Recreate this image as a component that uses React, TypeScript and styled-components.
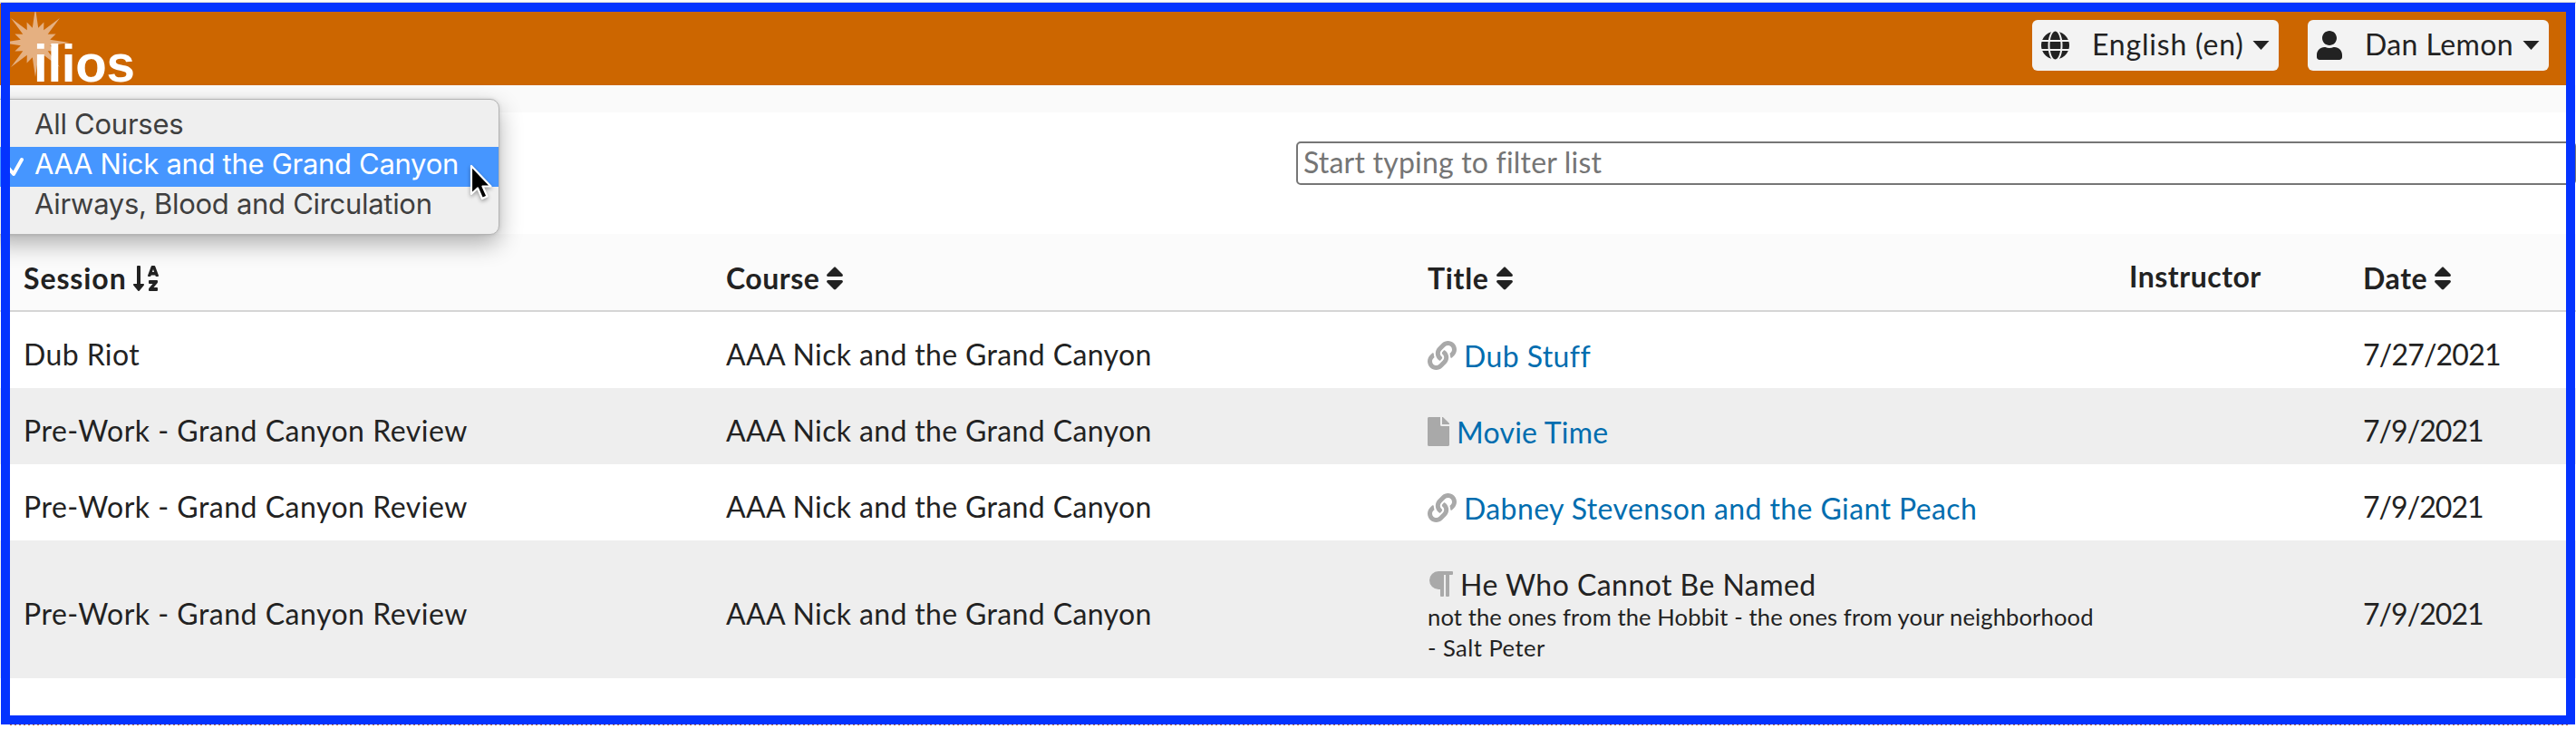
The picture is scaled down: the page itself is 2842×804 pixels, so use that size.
import React from "react";
import styled, { createGlobalStyle } from "styled-components";
import {
  FaFile,
  FaGlobe,
  FaLink,
  FaParagraph,
  FaSort,
  FaSortAlphaDown,
  FaUser,
} from "react-icons/fa";

const Global = createGlobalStyle`
  *, *::before, *::after { box-sizing: border-box; }
  body { margin: 0; background: #fff; }
`;

const Page = styled.div`
  position: relative;
  width: 2842px;
  height: 804px;
  overflow: hidden;
  background: #fff;
  color: #222;
  font-family: Lato, "Open Sans", sans-serif;
  font-size: 32px;
  line-height: 38px;
  white-space: nowrap;
`;

const Frame = styled.div`
  position: absolute;
  inset: 3px 1px 5px 1px;
  border: 10px solid #0433ff;
  pointer-events: none;
`;

const TopEdge = styled.div`
  height: 4px;
  border-top: 2px solid #fafafa;
  background: #d8d8d8;
`;

const BottomEdge = styled.div`
  position: absolute;
  left: 11px;
  right: 9px;
  top: 799px;
  height: 1px;
  background: repeating-linear-gradient(90deg, #b9673f 0 2px, #fff 2px 5px);
`;

const Text = styled.span<{ $spacing?: number }>`
  letter-spacing: ${(p) => p.$spacing ?? 0}px;
`;

const Header = styled.header`
  display: flex;
  justify-content: space-between;
  height: 90px;
  margin-right: 1px;
  padding: 0 29px 0 5px;
  background: #cc6600;
`;

const Logo = styled.div`
  position: relative;
  width: 160px;
  height: 90px;
`;

const Burst = styled.svg`
  display: block;
  width: 76px;
  height: 90px;
`;

const LogoName = styled.span`
  position: absolute;
  left: 32px;
  top: 34px;
  color: #fff;
  font: bold 56.5px/65px "Liberation Sans", Arial, sans-serif;
  letter-spacing: -0.3px;
`;

const HeaderMenus = styled.div`
  display: flex;
  gap: 32px;
  padding-top: 18px;
`;

const MenuButton = styled.button<{ $width: number }>`
  display: flex;
  align-items: center;
  width: ${(p) => p.$width}px;
  height: 56px;
  padding: 0 10px;
  border: 0;
  border-radius: 6px;
  background: #f3f3f3;
  color: #222;
  font: inherit;
  svg { flex: none; }
`;

const ButtonLabel = styled(Text)`
  flex: 1;
  padding: 0 0 3px 25px;
  text-align: left;
`;

const Caret = styled.svg`
  width: 19px;
  height: 10px;
`;

const SubBar = styled.div`
  height: 30px;
  background: #fafafa;
`;

const FilterBar = styled.div`
  display: flex;
  justify-content: flex-end;
  align-items: flex-start;
  height: 134px;
  padding-top: 32px;
`;

const FilterInput = styled.input`
  width: 1412px;
  height: 48px;
  padding: 0 4px 3px 6px;
  border: 2px solid #767676;
  border-radius: 5px;
  background: #fff;
  color: #222;
  font: inherit;
  letter-spacing: 0.2px;
  &::placeholder { color: #757575; opacity: 1; }
`;

const columns = "775px 774px 774px 258px 1fr";

const HeadRow = styled.div`
  display: grid;
  grid-template-columns: ${columns};
  align-items: center;
  height: 86px;
  padding: 13px 0 0 26px;
  border-bottom: 2px solid #d5d5d5;
  background: #fbfbfb;
  font-weight: 700;
`;

const HeadCell = styled.div<{ $plain?: boolean }>`
  display: flex;
  align-items: center;
  gap: 7px;
  padding-bottom: ${(p) => (p.$plain ? 3 : 0)}px;
`;

const Row = styled.div<{ $tall?: boolean; $shaded?: boolean }>`
  display: grid;
  grid-template-columns: ${columns};
  align-items: center;
  height: ${(p) => (p.$tall ? 152 : 84)}px;
  padding-left: 26px;
  background: ${(p) => (p.$shaded ? "#eeeeee" : "#fff")};
`;

const Cell = styled.div`
  padding-top: 9px;
`;

const TitleCell = styled.div`
  align-self: start;
  padding-top: 32px;
`;

const TitleLine = styled.div<{ $link?: boolean }>`
  display: flex;
  align-items: center;
  gap: 8px;
  height: 32px;
  color: ${(p) => (p.$link ? "#006daf" : "#222")};
  svg { color: #a9a9a9; }
`;

const TitleText = styled(Text)`
  padding-top: 2px;
`;

const Description = styled.div`
  margin-top: 4px;
  font-size: 25.6px;
  line-height: 33.5px;
`;

const Dropdown = styled.div`
  position: absolute;
  left: -12px;
  top: 109px;
  width: 563px;
  height: 150px;
  padding-top: 8px;
  border: 1px solid #b4b4b4;
  border-radius: 10px;
  background: #efefef;
  box-shadow: 0 10px 26px rgba(0, 0, 0, 0.3), 0 0 4px rgba(0, 0, 0, 0.12);
  font-family: Inter, Roboto, sans-serif;
  font-size: 31px;
`;

const Option = styled.div<{ $selected?: boolean; $spacing: number }>`
  display: flex;
  align-items: center;
  height: 44px;
  padding: 0 0 6px 16px;
  background: ${(p) => (p.$selected ? "#4696ff" : "transparent")};
  color: ${(p) => (p.$selected ? "#fff" : "#3f3f3f")};
  letter-spacing: ${(p) => p.$spacing}px;
`;

const CheckSlot = styled.span`
  display: flex;
  flex: none;
  width: 33px;
  padding-top: 5px;
`;

const Pointer = styled.svg`
  position: absolute;
  left: 516px;
  top: 179px;
  width: 29px;
  height: 44px;
  filter: drop-shadow(0 2px 2px rgba(0, 0, 0, 0.35));
`;

const rays = Array.from({ length: 16 }, (_, i) => {
  const angle = (i * Math.PI) / 8;
  const tip = i % 2 ? 24.5 : 38;
  const point = (r: number, a: number) =>
    `${(34 + r * Math.sin(a)).toFixed(1)},${(43 - r * Math.cos(a)).toFixed(1)}`;
  return `${point(tip, angle)} ${point(16.5, angle + Math.PI / 16)}`;
}).join(" ");

const CaretDown = () => (
  <Caret viewBox="0 0 19 10">
    <path d="M0.5 0H18.5L9.5 10Z" fill="currentColor" />
  </Caret>
);

const kinds = {
  link: { Icon: FaLink, width: 32 },
  file: { Icon: FaFile, width: 24 },
  text: { Icon: FaParagraph, width: 28 },
};

interface Item {
  session: [string, number];
  kind: keyof typeof kinds;
  title: [string, number];
  date: [string, number];
  notes?: [string, number][];
}

const review: [string, number] = ["Pre-Work - Grand Canyon Review", 0.5];
const shortDate: [string, number] = ["7/9/2021", -0.95];

const items: Item[] = [
  { session: ["Dub Riot", 0.4], kind: "link", title: ["Dub Stuff", 0.4], date: ["7/27/2021", -0.8] },
  { session: review, kind: "file", title: ["Movie Time", 0.25], date: shortDate },
  { session: review, kind: "link", title: ["Dabney Stevenson and the Giant Peach", 0.39], date: shortDate },
  {
    session: review,
    kind: "text",
    title: ["He Who Cannot Be Named", 0.45],
    date: shortDate,
    notes: [
      ["not the ones from the Hobbit - the ones from your neighborhood", 0.1],
      ["- Salt Peter", 0.45],
    ],
  },
];

const IconBox = styled.span<{ $width: number }>`
  display: flex;
  flex: none;
  width: ${(p) => p.$width}px;
  svg { flex: none; width: ${(p) => p.$width}px; height: 32px; }
`;

const Sort = () => (
  <IconBox $width={20}>
    <FaSort />
  </IconBox>
);

const TitleContent = ({ item }: { item: Item }) => {
  const { Icon, width } = kinds[item.kind];
  return (
    <TitleLine $link={item.kind !== "text"}>
      <IconBox $width={width}>
        <Icon />
      </IconBox>
      <TitleText $spacing={item.title[1]}>{item.title[0]}</TitleText>
    </TitleLine>
  );
};

export default function App() {
  return (
    <Page>
      <Global />
      <TopEdge />
      <Header>
        <Logo>
          <Burst viewBox="0 0 76 90">
            <polygon points={rays} fill="#e5b081" />
          </Burst>
          <LogoName>ilios</LogoName>
        </Logo>
        <HeaderMenus>
          <MenuButton $width={272}>
            <IconBox $width={31}>
              <FaGlobe />
            </IconBox>
            <ButtonLabel $spacing={0.8}>English (en)</ButtonLabel>
            <CaretDown />
          </MenuButton>
          <MenuButton $width={266}>
            <IconBox $width={28}>
              <FaUser />
            </IconBox>
            <ButtonLabel $spacing={0.4}>Dan Lemon</ButtonLabel>
            <CaretDown />
          </MenuButton>
        </HeaderMenus>
      </Header>
      <SubBar />
      <FilterBar>
        <FilterInput placeholder="Start typing to filter list" />
      </FilterBar>
      <HeadRow>
        <HeadCell>
          <Text $spacing={0.9}>Session</Text>
          <IconBox $width={28}>
            <FaSortAlphaDown />
          </IconBox>
        </HeadCell>
        <HeadCell>
          <Text $spacing={0.5}>Course</Text>
          <Sort />
        </HeadCell>
        <HeadCell>
          <Text $spacing={0.7}>Title</Text>
          <Sort />
        </HeadCell>
        <HeadCell $plain>
          <Text $spacing={0.5}>Instructor</Text>
        </HeadCell>
        <HeadCell>
          <Text $spacing={0.6}>Date</Text>
          <Sort />
        </HeadCell>
      </HeadRow>
      {items.map((item, i) => (
        <Row key={i} $tall={!!item.notes} $shaded={i % 2 === 1}>
          <Cell>
            <Text $spacing={item.session[1]}>{item.session[0]}</Text>
          </Cell>
          <Cell>
            <Text $spacing={0.36}>AAA Nick and the Grand Canyon</Text>
          </Cell>
          <TitleCell>
            <TitleContent item={item} />
            {item.notes && (
              <Description>
                {item.notes.map(([line, spacing]) => (
                  <div key={line}>
                    <Text $spacing={spacing}>{line}</Text>
                  </div>
                ))}
              </Description>
            )}
          </TitleCell>
          <Cell />
          <Cell>
            <Text $spacing={item.date[1]}>{item.date[0]}</Text>
          </Cell>
        </Row>
      ))}
      <Dropdown>
        <Option $spacing={-0.25}>
          <CheckSlot />
          All Courses
        </Option>
        <Option $selected $spacing={-0.3}>
          <CheckSlot>
            <svg width="21" height="22" viewBox="0 0 21 22">
              <path
                d="M4 12L10 19L19 3"
                fill="none"
                stroke="#fff"
                strokeWidth="4"
                strokeLinecap="round"
                strokeLinejoin="round"
              />
            </svg>
          </CheckSlot>
          AAA Nick and the Grand Canyon
        </Option>
        <Option $spacing={-0.3}>
          <CheckSlot />
          Airways, Blood and Circulation
        </Option>
      </Dropdown>
      <Pointer viewBox="0 0 29 44">
        <path
          d="M4 4V35L11 28.5L16 40L21.5 37.5L16.5 26.5H25.5Z"
          fill="#000"
          stroke="#fff"
          strokeWidth="2.2"
          strokeLinejoin="round"
        />
      </Pointer>
      <BottomEdge />
      <Frame />
    </Page>
  );
}
